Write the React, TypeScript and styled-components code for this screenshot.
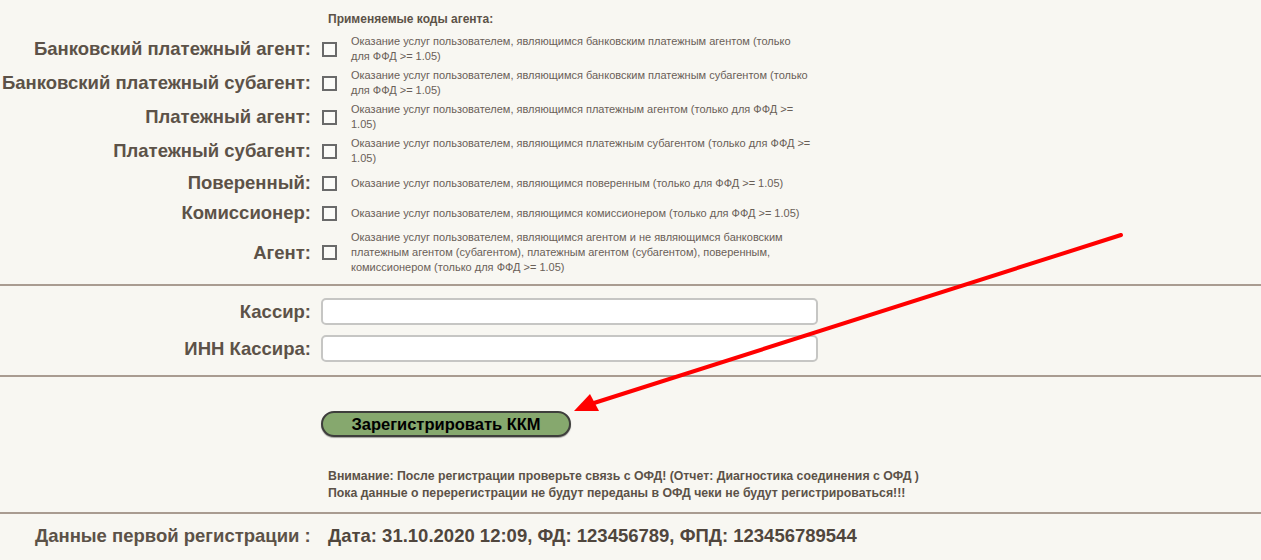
import React from "react";
import styled, {createGlobalStyle} from "styled-components";

const GlobalStyle = createGlobalStyle`
  html, body {
    margin: 0;
    padding: 0;
    background: #f8f7f2;
  }
  body {
    font-family: "Liberation Sans", Arial, sans-serif;
    color: #5c5248;
  }
`;

const Page = styled.div`
  position: relative;
  width: 1261px;
  height: 560px;
  overflow: hidden;
  padding-top: 11px;
  box-sizing: border-box;
`;

const AgentHeader = styled.div`
  padding-left: 328px;
  height: 16px;
  line-height: 16px;
  margin-bottom: 5px;
  font-size: 12px;
  font-weight: 700;
`;

const AgentTable = styled.div`
  display: grid;
  grid-template-columns: 311px 26px 480px;
`;

const AgentRow = styled.div`
  display: contents;
`;

const AgentLabel = styled.div`
  box-sizing: border-box;
  display: flex;
  align-items: center;
  justify-content: flex-end;
  min-height: 30px;
  padding: 2px 0;
  font-size: 18.5px;
  font-weight: 700;
  white-space: nowrap;
`;

const CheckCell = styled.div`
  display: flex;
  align-items: center;
  padding-left: 11px;
`;

const CheckBox = styled.span`
  display: block;
  flex: none;
  box-sizing: border-box;
  width: 15px;
  height: 15px;
  border: 2px solid #6a6a6a;
  background: #fbfbf8;
`;

const AgentDesc = styled.div`
  display: flex;
  align-items: center;
  padding: 2px 0 2px 14px;
  width: 460px;
  font-size: 11px;
  line-height: 15px;
  color: #6a6058;
`;

const Divider = styled.hr<{ $top: number; $bottom: number }>`
  margin: ${p => p.$top}px 0 ${p => p.$bottom}px;
  border: none;
  height: 2px;
  background: #a99c91;
`;

const FieldRow = styled.div`
  display: flex;
  align-items: center;
  gap: 10px;
  & + & {
    margin-top: 10px;
  }
`;

const FieldLabel = styled.label`
  width: 311px;
  text-align: right;
  font-size: 18.5px;
  font-weight: 700;
`;

const TextInput = styled.input`
  box-sizing: border-box;
  width: 497px;
  height: 27px;
  border: 2px solid #c6c6c4;
  border-radius: 5px;
  background: #fff;
  outline: none;
`;

const ButtonBox = styled.div`
  padding: 34px 0 0 321px;
`;

const RegisterButton = styled.button`
  box-sizing: border-box;
  width: 250px;
  height: 26px;
  border: 2px solid #3e3e3c;
  border-radius: 13px;
  background: #86a86e;
  box-shadow: 0 1px 1px rgba(0, 0, 0, 0.35);
  font-family: "Liberation Sans", Arial, sans-serif;
  font-size: 16.5px;
  font-weight: 700;
  color: #000;
  padding: 0;
  cursor: pointer;
`;

const Notice = styled.div`
  padding: 31px 0 0 328px;
  font-size: 12.3px;
  font-weight: 700;
  line-height: 17px;
`;

const RegRow = styled.div`
  display: flex;
  align-items: center;
  height: 20px;
  font-weight: 700;
  font-size: 18.5px;
`;

const RegLabel = styled.div`
  width: 293px;
  padding-left: 35px;
`;

const RegValue = styled.div`
  color: #50463d;
`;

const ArrowLayer = styled.svg`
  position: absolute;
  left: 0;
  top: 0;
  pointer-events: none;
`;

const agents = [
    {label: "Банковский платежный агент:", text: "Оказание услуг пользователем, являющимся банковским платежным агентом (только для ФФД >= 1.05)"},
    {label: "Банковский платежный субагент:", text: "Оказание услуг пользователем, являющимся банковским платежным субагентом (только для ФФД >= 1.05)"},
    {label: "Платежный агент:", text: "Оказание услуг пользователем, являющимся платежным агентом (только для ФФД >= 1.05)"},
    {label: "Платежный субагент:", text: "Оказание услуг пользователем, являющимся платежным субагентом (только для ФФД >= 1.05)"},
    {label: "Поверенный:", text: "Оказание услуг пользователем, являющимся поверенным (только для ФФД >= 1.05)"},
    {label: "Комиссионер:", text: "Оказание услуг пользователем, являющимся комиссионером (только для ФФД >= 1.05)"},
    {label: "Агент:", text: "Оказание услуг пользователем, являющимся агентом и не являющимся банковским платежным агентом (субагентом), платежным агентом (субагентом), поверенным, комиссионером (только для ФФД >= 1.05)"},
];

const App = () => {
    return (
        <Page>
            <GlobalStyle/>
            <AgentHeader>Применяемые коды агента:</AgentHeader>
            <AgentTable>
                {agents.map(item =>
                    <AgentRow key={item.label}>
                        <AgentLabel>{item.label}</AgentLabel>
                        <CheckCell><CheckBox/></CheckCell>
                        <AgentDesc>{item.text}</AgentDesc>
                    </AgentRow>
                )}
            </AgentTable>
            <Divider $top={7} $bottom={12}/>
            <FieldRow>
                <FieldLabel>Кассир:</FieldLabel>
                <TextInput/>
            </FieldRow>
            <FieldRow>
                <FieldLabel>ИНН Кассира:</FieldLabel>
                <TextInput/>
            </FieldRow>
            <Divider $top={13} $bottom={0}/>
            <ButtonBox>
                <RegisterButton>Зарегистрировать ККМ</RegisterButton>
            </ButtonBox>
            <Notice>
                Внимание: После регистрации проверьте связь с ОФД! (Отчет: Диагностика соединения с ОФД )<br/>
                Пока данные о перерегистрации не будут переданы в ОФД чеки не будут регистрироваться!!!
            </Notice>
            <Divider $top={10} $bottom={12}/>
            <RegRow>
                <RegLabel>Данные первой регистрации :</RegLabel>
                <RegValue>Дата: 31.10.2020 12:09, ФД: 123456789, ФПД: 123456789544</RegValue>
            </RegRow>
            <ArrowLayer width="1261" height="560" viewBox="0 0 1261 560">
                <line x1="1121" y1="235" x2="594" y2="403" stroke="#ff0000" strokeWidth="4" strokeLinecap="round"/>
                <polygon points="574,411 590,394 599,411" fill="#ff0000"/>
            </ArrowLayer>
        </Page>
    );
};

export default App;
